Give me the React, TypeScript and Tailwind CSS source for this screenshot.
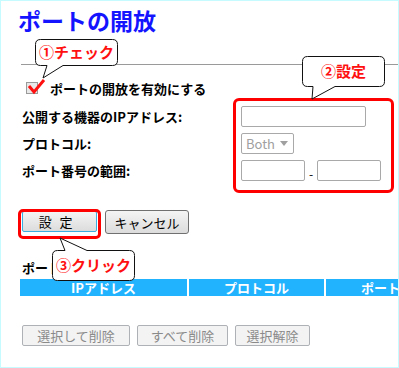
import React from 'react';

const jp = { fontFamily: '"Noto Sans CJK JP", "Noto Sans", sans-serif' };

function Callout({ left, top, height, label, tail }: { left: number; top: number; height: number; label: string; tail: 'down-left' | 'down' | 'up' }) {
  // box is 83 x height, tail adds ~12-14px
  const w = 83;
  const r = 5;
  let d = '';
  let boxTop = 0.5;
  let boxBottom = height - 0.5;
  if (tail === 'up') {
    boxTop = 13.5;
    boxBottom = 13 + height - 0.5;
    d = `M${r + 0.5},${boxTop} L13,${boxTop} L8,1 L35,${boxTop} L${w - r - 0.5},${boxTop} Q${w - 0.5},${boxTop} ${w - 0.5},${boxTop + r} L${w - 0.5},${boxBottom - r} Q${w - 0.5},${boxBottom} ${w - r - 0.5},${boxBottom} L${r + 0.5},${boxBottom} Q0.5,${boxBottom} 0.5,${boxBottom - r} L0.5,${boxTop + r} Q0.5,${boxTop} ${r + 0.5},${boxTop} Z`;
  } else {
    const t1 = tail === 'down-left' ? 12 : 11;
    const tipX = tail === 'down-left' ? 8 : 10;
    const t2 = tail === 'down-left' ? 28 : 33;
    d = `M${r + 0.5},${boxTop} L${w - r - 0.5},${boxTop} Q${w - 0.5},${boxTop} ${w - 0.5},${boxTop + r} L${w - 0.5},${boxBottom - r} Q${w - 0.5},${boxBottom} ${w - r - 0.5},${boxBottom} L${t2},${boxBottom} L${tipX},${height + 12} L${t1},${boxBottom} L${r + 0.5},${boxBottom} Q0.5,${boxBottom} 0.5,${boxBottom - r} L0.5,${boxTop + r} Q0.5,${boxTop} ${r + 0.5},${boxTop} Z`;
  }
  const total = height + 13;
  return (
    <div className="absolute" style={{ left, top, width: w, height: total }}>
      <svg width={w} height={total} className="absolute left-0 top-0">
        <path d={d} fill="#fff" stroke="#111" strokeWidth="1" />
      </svg>
      <div
        className="absolute left-0 w-full flex items-center justify-center text-[15px] font-bold text-[#ff1010]"
        style={{ top: tail === 'up' ? 13 : 0, height }}
      >
        {label}
      </div>
    </div>
  );
}

export default function App() {
  return (
    <div className="relative w-[399px] h-[368px] overflow-hidden border border-[#c6fbff] bg-white text-black" style={jp}>
      <h1 className="pl-[17px] pt-[5px] text-[23px] leading-[29px] font-bold text-[#1414ff]">ポートの開放</h1>

      <div className="ml-[20px] mt-[29px] border-t border-[#9a9a9a]" />

      {/* enable row */}
      <div className="mt-[13px] flex h-[20px] items-center pl-[25px]">
        <span className="h-[12px] w-[12px] border border-[#9a9a9a] bg-[#e8e8e8]" />
        <span className="ml-[12px] text-[13px] font-bold leading-none">ポートの開放を有効にする</span>
      </div>

      {/* form */}
      <div className="mt-[5px] grid grid-cols-[219px_1fr] pl-[21px] text-[13px] font-bold">
        <div className="flex h-[27px] items-center">公開する機器のIPアドレス:</div>
        <div className="flex h-[27px] items-center">
          <div className="h-[21px] w-[125px] rounded-[2px] border border-[#a9a9a9] bg-white" />
        </div>
        <div className="flex h-[27px] items-center">プロトコル:</div>
        <div className="flex h-[27px] items-center">
          <div className="flex h-[21px] w-[53px] items-center justify-between rounded-[2px] border border-[#a9a9a9] bg-white pl-[4px] pr-[5px] text-[13px] font-normal text-[#a0a0a0]">
            <span>Both</span>
            <span className="h-0 w-0 border-x-[4px] border-t-[5px] border-x-transparent border-t-[#a0a0a0]" />
          </div>
        </div>
        <div className="flex h-[27px] items-center">ポート番号の範囲:</div>
        <div className="flex h-[27px] items-center">
          <div className="h-[21px] w-[64px] rounded-[2px] border border-[#a9a9a9] bg-white" />
          <span className="mx-[4px] mt-[6px] text-[12px] font-normal">-</span>
          <div className="h-[21px] w-[64px] rounded-[2px] border border-[#a9a9a9] bg-white" />
        </div>
      </div>

      {/* set / cancel */}
      <div className="mt-[27px] flex gap-[8px] pl-[21px] text-[13px]">
        <button className="h-[21px] w-[75px] rounded-[2px] border border-[#3aaee0] bg-gradient-to-b from-[#f4f4f4] to-[#dcdcdc] leading-none tracking-[0.6em]">
          設定
        </button>
        <button className="h-[24px] w-[84px] -mt-[1px] rounded-[3px] border border-[#707070] bg-gradient-to-b from-[#f4f4f4] to-[#dcdcdc] leading-none">
          キャンセル
        </button>
      </div>

      <div className="mt-[26px] pl-[21px] text-[13px] font-bold leading-[16px]">ポート開放の一覧</div>

      <div className="mt-[3px] ml-[19px] flex h-[17px] gap-[2px] text-[13px] font-bold text-white">
        <div className="flex w-[167px] shrink-0 items-center justify-center bg-[#22b3ff]">IPアドレス</div>
        <div className="flex w-[135px] shrink-0 items-center justify-center bg-[#22b3ff]">プロトコル</div>
        <div className="flex w-[135px] shrink-0 items-center justify-center bg-[#22b3ff]">ポート番号</div>
      </div>

      <div className="mt-[29px] flex gap-[7px] pl-[21px] text-[13px] text-[#8a8a8a]">
        <button className="h-[21px] w-[108px] rounded-[2px] border border-[#aeb2b6] bg-[#f3f3f3] leading-none">選択して削除</button>
        <button className="h-[21px] w-[91px] rounded-[2px] border border-[#aeb2b6] bg-[#f3f3f3] leading-none">すべて削除</button>
        <button className="h-[21px] w-[75px] rounded-[2px] border border-[#aeb2b6] bg-[#f3f3f3] leading-none">選択解除</button>
      </div>

      {/* annotations */}
      <svg className="absolute left-[26px] top-[76px]" width="20" height="20" viewBox="0 0 20 20">
        <path d="M2,9 L7,15 L17,3" fill="none" stroke="#ff1010" strokeWidth="3" strokeLinejoin="miter" />
      </svg>
      <div className="absolute left-[232px] top-[97px] h-[95px] w-[161px] rounded-[6px] border-[3px] border-[#ff0000]" />
      <div className="absolute left-[17px] top-[208px] h-[30px] w-[83px] rounded-[5px] border-[3px] border-[#ff0000]" />

      <Callout left={34} top={38} height={27} label="①チェック" tail="down-left" />
      <Callout left={301} top={55} height={31} label="②設定" tail="down" />
      <Callout left={51} top={236} height={31} label="③クリック" tail="up" />
    </div>
  );
}
